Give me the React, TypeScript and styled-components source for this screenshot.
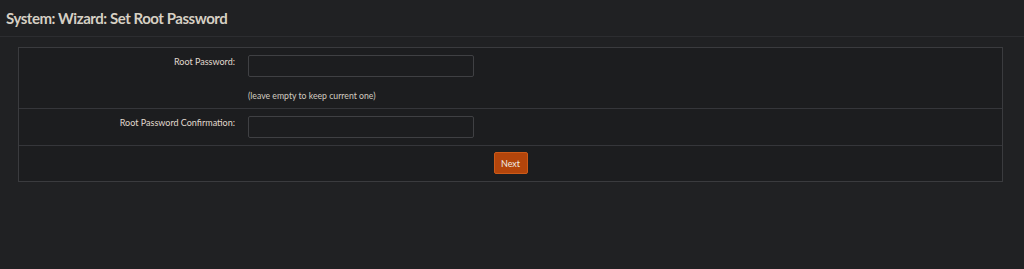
import React from "react";
import styled, { createGlobalStyle } from "styled-components";

const GlobalStyle = createGlobalStyle`
  html, body {
    margin: 0;
    padding: 0;
    background: #202123;
  }
  body {
    font-family: Lato, "Open Sans", sans-serif;
    color: #d4cec2;
  }
`;

const Page = styled.div`
  width: 1024px;
  height: 269px;
  background: #202123;
`;

const Header = styled.header`
  height: 37px;
  display: flex;
  align-items: center;
  padding-left: 6px;
  padding-bottom: 1px;
  border-bottom: 1px solid #2c2d30;
  box-sizing: border-box;
`;

const Title = styled.h1`
  margin: 0;
  font-size: 15px;
  font-weight: 700;
  letter-spacing: -0.45px;
  color: #d6d0c4;
`;

const Content = styled.main`
  padding: 10px 21px 0 18px;
`;

const Table = styled.div`
  background: #1c1d1f;
  border: 1px solid #3a3b3e;
`;

const Row = styled.div`
  display: grid;
  grid-template-columns: 222px 1fr;
  border-bottom: 1px solid #35363a;
`;

const Label = styled.div`
  text-align: right;
  padding: 8px 6px 0 0;
  font-size: 9px;
  color: #e0dacf;
`;

const Cell = styled.div`
  padding: 7px 0 7px 7px;
`;

const Input = styled.input`
  display: block;
  width: 226px;
  height: 22px;
  box-sizing: border-box;
  background: #1c1d1f;
  border: 1px solid #3f4043;
  border-radius: 2px;
  color: #d4cec2;
  outline: none;
`;

const Help = styled.div`
  margin-top: 13px;
  line-height: 11px;
  font-size: 8.7px;
  color: #d2ccc0;
`;

const Footer = styled.div`
  display: flex;
  justify-content: center;
  padding: 6px 0 7px;
`;

const Button = styled.button`
  width: 34px;
  height: 22px;
  padding: 0;
  background: #b3450b;
  border: 1px solid #cc5a18;
  border-radius: 2px;
  color: #f1ebe3;
  font-family: Lato, sans-serif;
  font-size: 9px;
`;

export default function App() {
  return (
    <Page>
      <GlobalStyle />
      <Header>
        <Title>System: Wizard: Set Root Password</Title>
      </Header>
      <Content>
        <Table>
          <Row>
            <Label>Root Password:</Label>
            <Cell>
              <Input type="password" />
              <Help>(leave empty to keep current one)</Help>
            </Cell>
          </Row>
          <Row>
            <Label>Root Password Confirmation:</Label>
            <Cell>
              <Input type="password" />
            </Cell>
          </Row>
          <Footer>
            <Button>Next</Button>
          </Footer>
        </Table>
      </Content>
    </Page>
  );
}
